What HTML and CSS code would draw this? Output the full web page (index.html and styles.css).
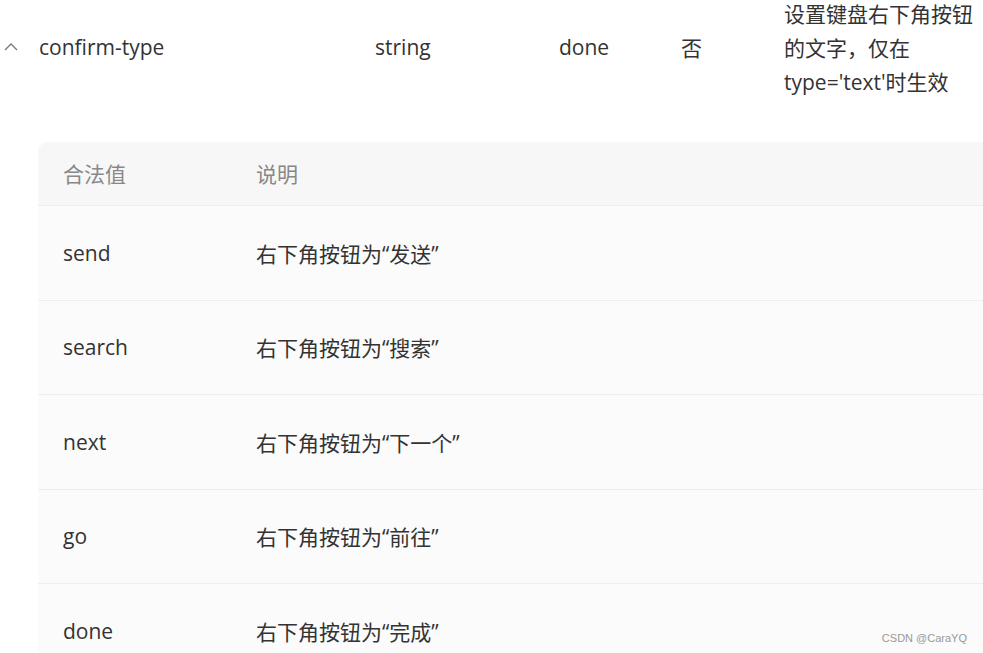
FILE: index.html
```html
<!DOCTYPE html>
<html lang="zh-CN">
<head>
    <meta charset="UTF-8">
    <title>confirm-type</title>
    <link rel="stylesheet" href="styles.css">
</head>
<body>

    <div class="prop-row">
        <div class="toggle">
            <svg width="14" height="9" viewBox="0 0 14 9">
                <polyline points="1,8 7,2 13,8" fill="none" stroke="#777" stroke-width="1.3"/>
            </svg>
        </div>
        <div class="prop-name">confirm-type</div>
        <div class="prop-type">string</div>
        <div class="prop-default">done</div>
        <div class="prop-required">否</div>
        <div class="prop-desc">设置键盘右下角按钮的文字，仅在type='text'时生效</div>
    </div>

    <div class="sub-table">
        <div class="sub-head">
            <div class="col-value">合法值</div>
            <div class="col-desc">说明</div>
        </div>
        <div class="sub-row">
            <div class="col-value">send</div>
            <div class="col-desc">右下角按钮为“发送”</div>
        </div>
        <div class="sub-row">
            <div class="col-value">search</div>
            <div class="col-desc">右下角按钮为“搜索”</div>
        </div>
        <div class="sub-row">
            <div class="col-value">next</div>
            <div class="col-desc">右下角按钮为“下一个”</div>
        </div>
        <div class="sub-row">
            <div class="col-value">go</div>
            <div class="col-desc">右下角按钮为“前往”</div>
        </div>
        <div class="sub-row">
            <div class="col-value">done</div>
            <div class="col-desc">右下角按钮为“完成”</div>
        </div>
    </div>

    <div class="watermark">CSDN @CaraYQ</div>

</body>
</html>
```

FILE: styles.css
```css
body {
    font-family: "Open Sans", "Noto Sans CJK SC", sans-serif;
    font-size: 21px;
    color: #333;
    margin: 0;
    padding: 0;
    overflow: hidden;
    height: 653px;
    position: relative;
    background-color: #fff;
}
.prop-row {
    display: flex;
    align-items: center;
    margin-top: -3px;
}
.prop-row > div {
    padding-bottom: 3px;
}
.toggle {
    width: 39px;
    display: flex;
    padding-left: 4px;
    box-sizing: border-box;
}
.prop-name {
    width: 336px;
}
.prop-type {
    width: 184px;
}
.prop-default {
    width: 122px;
}
.prop-required {
    width: 103px;
}
.prop-row .prop-desc {
    width: 196px;
    line-height: 34px;
    padding-bottom: 0;
}
.sub-table {
    margin: 43px 0 0 38px;
    width: 980px;
    border-top-left-radius: 10px;
    overflow: hidden;
}
.sub-head {
    display: flex;
    align-items: center;
    height: 64px;
    padding-bottom: 2px;
    box-sizing: border-box;
    background-color: #f7f7f7;
    color: #888;
    border-bottom: 1px solid #eeeeee;
}
.sub-row {
    display: flex;
    align-items: center;
    height: 94.5px;
    box-sizing: border-box;
    background-color: #fbfbfb;
    border-bottom: 1px solid #eeeeee;
}
.col-value {
    width: 218px;
    padding-left: 25px;
    box-sizing: border-box;
}
.col-desc {
    flex: 1;
}
.watermark {
    position: absolute;
    right: 16px;
    bottom: 9px;
    font-family: "Liberation Sans", Arial, sans-serif;
    font-size: 11px;
    color: #999;
}
```
